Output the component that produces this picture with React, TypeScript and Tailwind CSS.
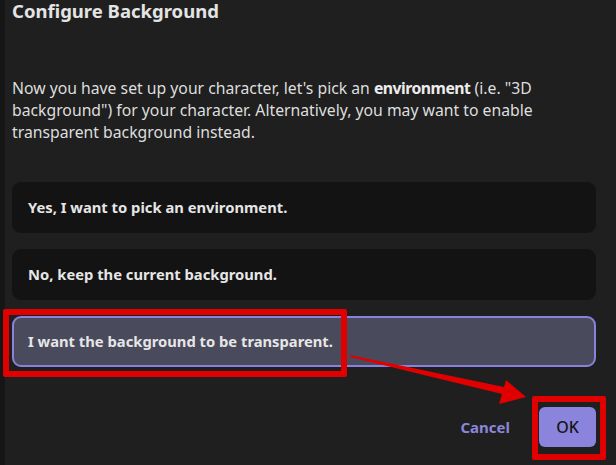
import React from "react"

const options = [
  { id: 1, label: "Yes, I want to pick an environment." },
  { id: 2, label: "No, keep the current background." },
  { id: 3, label: "I want the background to be transparent." },
]

export default function App() {
  const selected = 3

  return (
    <div className="relative flex h-[465px] w-[616px] overflow-hidden bg-[#161616]" style={{ fontFamily: '"Noto Sans", "Open Sans", sans-serif' }}>
      <div className="ml-[5px] flex flex-1 flex-col bg-[#1f1f1f] pl-[7px] pr-[20px]">
        <h1 className="text-[18.5px] font-bold leading-[22px] text-[#e4e4e4]">Configure Background</h1>

        <p className="mt-[55px] text-[15.75px] leading-[22px] text-[#dedede]">
          Now you have set up your character, let's pick an <b className="font-bold tracking-[-0.5px] text-[#ececec]">environment</b> (i.e. "3D
          <br />
          background") for your character. Alternatively, you may want to enable
          <br />
          transparent background instead.
        </p>

        <div className="mt-[39px] flex flex-col gap-[16px]">
          {options.map(opt => (
            <div
              key={opt.id}
              className={
                opt.id === selected
                  ? "flex h-[51px] items-center rounded-[9px] border-2 border-[#8982dd] bg-[#4a4a5d] pl-[14px] text-[14.75px] font-bold text-[#e6e6e6]"
                  : "flex h-[51px] items-center rounded-[9px] bg-[#131313] pl-[16px] text-[14.75px] font-bold text-[#e6e6e6]"
              }
            >
              {opt.label}
            </div>
          ))}
        </div>

        <div className="mt-[40px] flex items-center justify-end gap-[29px]">
          <button className="text-[15px] font-bold text-[#8b86d9]">Cancel</button>
          <button className="h-[40px] w-[57px] rounded-[6px] bg-[#8a84dc] text-[16px] font-medium text-[#161616]">OK</button>
        </div>
      </div>

      {/* red annotation marks */}
      <div className="pointer-events-none absolute left-[3px] top-[309px] h-[68px] w-[344px] rounded-[2px] border-[6px] border-[#e10000]" />
      <div className="pointer-events-none absolute left-[532px] top-[396px] h-[64px] w-[74px] rounded-[2px] border-[6px] border-[#e10000]" />
      <svg className="pointer-events-none absolute left-0 top-0" width="616" height="465">
        <polygon points="350,355 504,387 506,380 526,397 499,404 502,394 350,357" fill="#e10000" />
      </svg>
    </div>
  )
}
